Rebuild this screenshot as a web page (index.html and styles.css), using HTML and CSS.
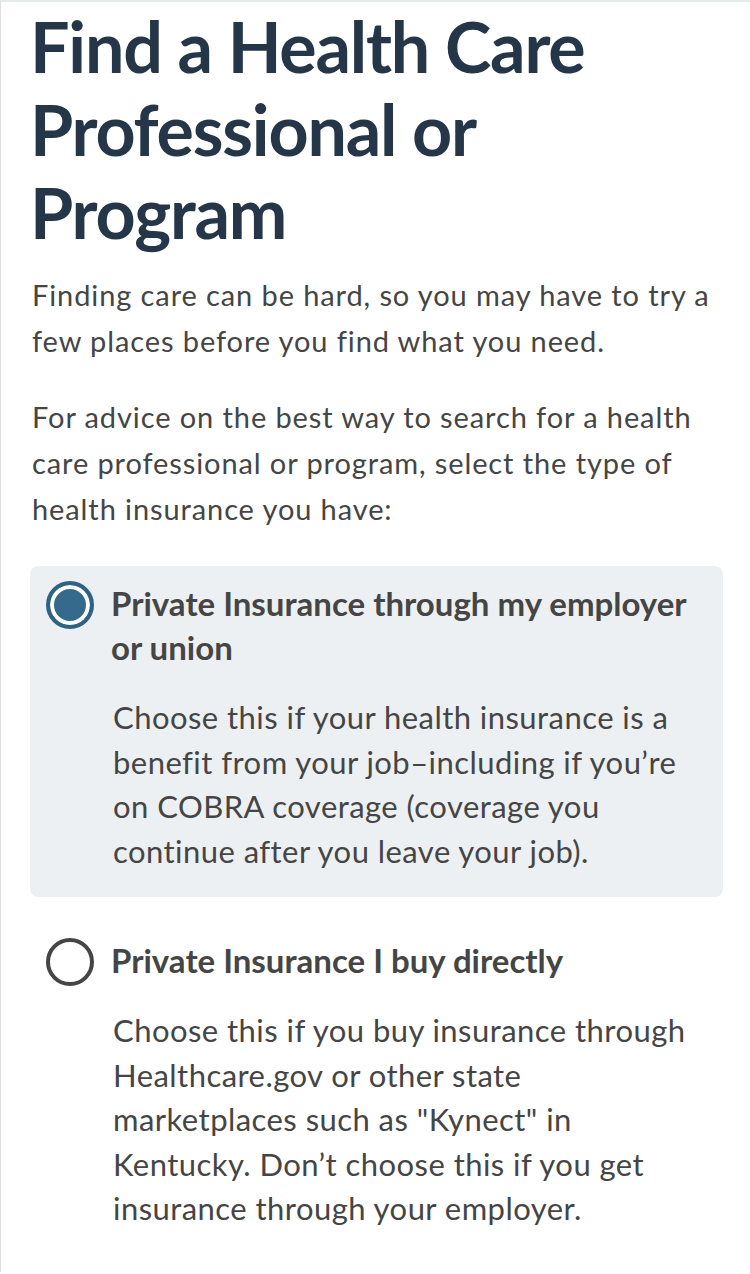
FILE: index.html
```html
<!DOCTYPE html>
<html lang="en">
<head>
<meta charset="utf-8">
<title>Find a Health Care Professional or Program</title>
<link rel="stylesheet" href="styles.css">
</head>
<body>
<main class="page">
  <h1 class="title">Find a Health Care Professional or Program</h1>
  <p class="intro">Finding care can be hard, so you may have to try a few places before you find what you need.</p>
  <p class="intro intro-last">For advice on the best way to search for a health care professional or program, select the type of health insurance you have:</p>
  <div class="options" role="radiogroup">
    <div class="option option-selected" role="radio" aria-checked="true">
      <span class="radio radio-on"></span>
      <div class="option-body">
        <div class="option-title">Private Insurance through my employer or union</div>
        <p class="option-desc">Choose this if your health insurance is a benefit from your job–including if you’re on COBRA coverage (coverage you continue after you leave your job).</p>
      </div>
    </div>
    <div class="option" role="radio" aria-checked="false">
      <span class="radio"></span>
      <div class="option-body">
        <div class="option-title">Private Insurance I buy directly</div>
        <p class="option-desc">Choose this if you buy insurance through Healthcare.gov or other state marketplaces such as "Kynect" in Kentucky. Don’t choose this if you get insurance through your employer.</p>
      </div>
    </div>
  </div>
</main>
</body>
</html>
```

FILE: styles.css
```css
html, body {
  margin: 0;
  padding: 0;
  background: #ffffff;
}

body {
  font-family: "Lato", "Open Sans", sans-serif;
  color: #454545;
}

.page {
  min-height: 1272px;
  border-top: 2px solid #e6e9ed;
  border-left: 1px solid #dcdfe3;
  padding: 0 27px 0 29px;
  box-sizing: border-box;
}

.title {
  margin: 0;
  padding-top: 3px;
  font-size: 70px;
  line-height: 83px;
  font-weight: 700;
  color: #243648;
  letter-spacing: -1.2px;
}

.intro {
  margin: 18px 0 0 2px;
  font-size: 29px;
  line-height: 46px;
  letter-spacing: 0.9px;
}

.intro + .intro {
  margin-top: 30px;
}

.options {
  margin-top: 34px;
  display: flex;
  flex-direction: column;
  gap: 26px;
}

.option {
  display: flex;
  align-items: flex-start;
  gap: 17px;
  padding: 15px 16px 24px 16px;
  border-radius: 8px;
}

.option-selected {
  background: #edf0f2;
}

.radio {
  flex: none;
  width: 48px;
  height: 48px;
  box-sizing: border-box;
  border-radius: 50%;
  border: 4px solid #454545;
  background: #ffffff;
}

.radio-on {
  border-color: #2f6384;
  background: #356a8c;
  box-shadow: inset 0 0 0 4px #ffffff;
}

.option-body {
  flex: 1;
  min-width: 0;
}

.option-title {
  font-size: 33px;
  line-height: 44px;
  font-weight: 700;
  letter-spacing: 0;
  color: #454545;
}

.option-desc {
  margin: 26px 0 0 2px;
  font-size: 31px;
  line-height: 44.5px;
  letter-spacing: 0.45px;
  color: #454545;
}
```
